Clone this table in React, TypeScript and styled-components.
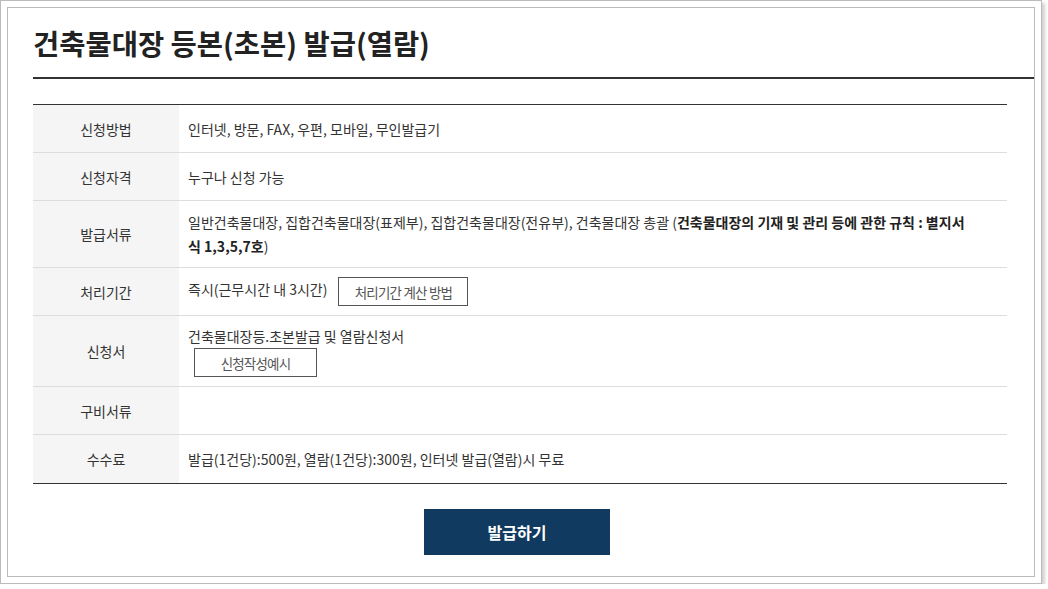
import styled, { createGlobalStyle } from "styled-components";

const GlobalStyle = createGlobalStyle`
  body {
    margin: 0;
    background: #fff;
    font-family: "Noto Sans CJK KR", "Noto Sans", sans-serif;
    color: #333;
  }
`;

const Frame = styled.div`
  width: 1042px;
  height: 584px;
  box-sizing: border-box;
  border: 1px solid #bbb;
  padding: 6px;
  background: #fff;
  box-shadow: 3px 3px 3px rgba(0, 0, 0, 0.18);
`;

const Panel = styled.div`
  height: 100%;
  box-sizing: border-box;
  border: 1px solid #bbb;
  padding-left: 25px;
`;

const Header = styled.div`
  padding: 15px 0 14px;
  border-bottom: 2px solid #333;
`;

const Title = styled.h1`
  margin: 0;
  font-size: 28.5px;
  line-height: 40px;
  font-weight: 700;
  color: #222;
`;

const InfoTable = styled.table`
  width: calc(100% - 27px);
  margin-top: 25px;
  border-collapse: collapse;
  border-top: 1px solid #333;
  border-bottom: 1px solid #333;
  font-size: 14px;
`;

const Row = styled.tr<{ $h?: number }>`
  height: ${({ $h }) => $h ?? 48}px;
  border-bottom: 1px solid #ddd;
  &:last-child {
    border-bottom: 1px solid #333;
  }
`;

const Label = styled.th`
  width: 146px;
  background: #f5f5f5;
  font-weight: 400;
  color: #333;
  text-align: center;
  padding: 0;
`;

const Value = styled.td<{ $breakAll?: boolean; $top?: number }>`
  padding: ${({ $top }) => $top ?? 9}px ${({ $breakAll }) => ($breakAll ? 35 : 10)}px 9px 9px;
  line-height: 24px;
  color: #333;
  vertical-align: middle;
  word-break: ${({ $breakAll }) => ($breakAll ? "break-all" : "normal")};
`;

const Strong = styled.b`
  font-weight: 700;
  color: #222;
`;

const OutlineButton = styled.button<{ $block?: boolean; $width: number }>`
  display: ${({ $block }) => ($block ? "block" : "inline-block")};
  width: ${({ $width }) => $width}px;
  height: 29px;
  padding: 0;
  margin-left: ${({ $block }) => ($block ? "6px" : "11px")};
  border: 1px solid #555;
  background: #fff;
  font-family: inherit;
  font-size: 13.5px;
  letter-spacing: -0.8px;
  color: #555;
  vertical-align: middle;
`;

const Actions = styled.div`
  display: flex;
  justify-content: center;
  width: calc(100% - 33px);
  margin-top: 25px;
`;

const IssueButton = styled.button`
  width: 186px;
  height: 46px;
  border: none;
  background: #103a5f;
  color: #fff;
  font-family: inherit;
  font-size: 16px;
  font-weight: 700;
`;

function App() {
  return (
    <>
      <GlobalStyle />
      <Frame>
        <Panel>
          <Header>
            <Title>건축물대장 등본(초본) 발급(열람)</Title>
          </Header>
          <InfoTable>
            <tbody>
              <Row>
                <Label>신청방법</Label>
                <Value>인터넷, 방문, FAX, 우편, 모바일, 무인발급기</Value>
              </Row>
              <Row>
                <Label>신청자격</Label>
                <Value>누구나 신청 가능</Value>
              </Row>
              <Row>
                <Label>발급서류</Label>
                <Value $breakAll>
                  일반건축물대장, 집합건축물대장(표제부), 집합건축물대장(전유부), 건축물대장 총괄 (
                  <Strong>건축물대장의 기재 및 관리 등에 관한 규칙 : 별지서식 1,3,5,7호</Strong>)
                </Value>
              </Row>
              <Row>
                <Label>처리기간</Label>
                <Value>
                  즉시(근무시간 내 3시간)
                  <OutlineButton $width={130}>처리기간 계산 방법</OutlineButton>
                </Value>
              </Row>
              <Row>
                <Label>신청서</Label>
                <Value $top={8}>
                  건축물대장등.초본발급 및 열람신청서
                  <OutlineButton $block $width={123}>
                    신청작성예시
                  </OutlineButton>
                </Value>
              </Row>
              <Row>
                <Label>구비서류</Label>
                <Value></Value>
              </Row>
              <Row $h={49}>
                <Label>수수료</Label>
                <Value>발급(1건당):500원, 열람(1건당):300원, 인터넷 발급(열람)시 무료</Value>
              </Row>
            </tbody>
          </InfoTable>
          <Actions>
            <IssueButton>발급하기</IssueButton>
          </Actions>
        </Panel>
      </Frame>
    </>
  );
}

export default App;
